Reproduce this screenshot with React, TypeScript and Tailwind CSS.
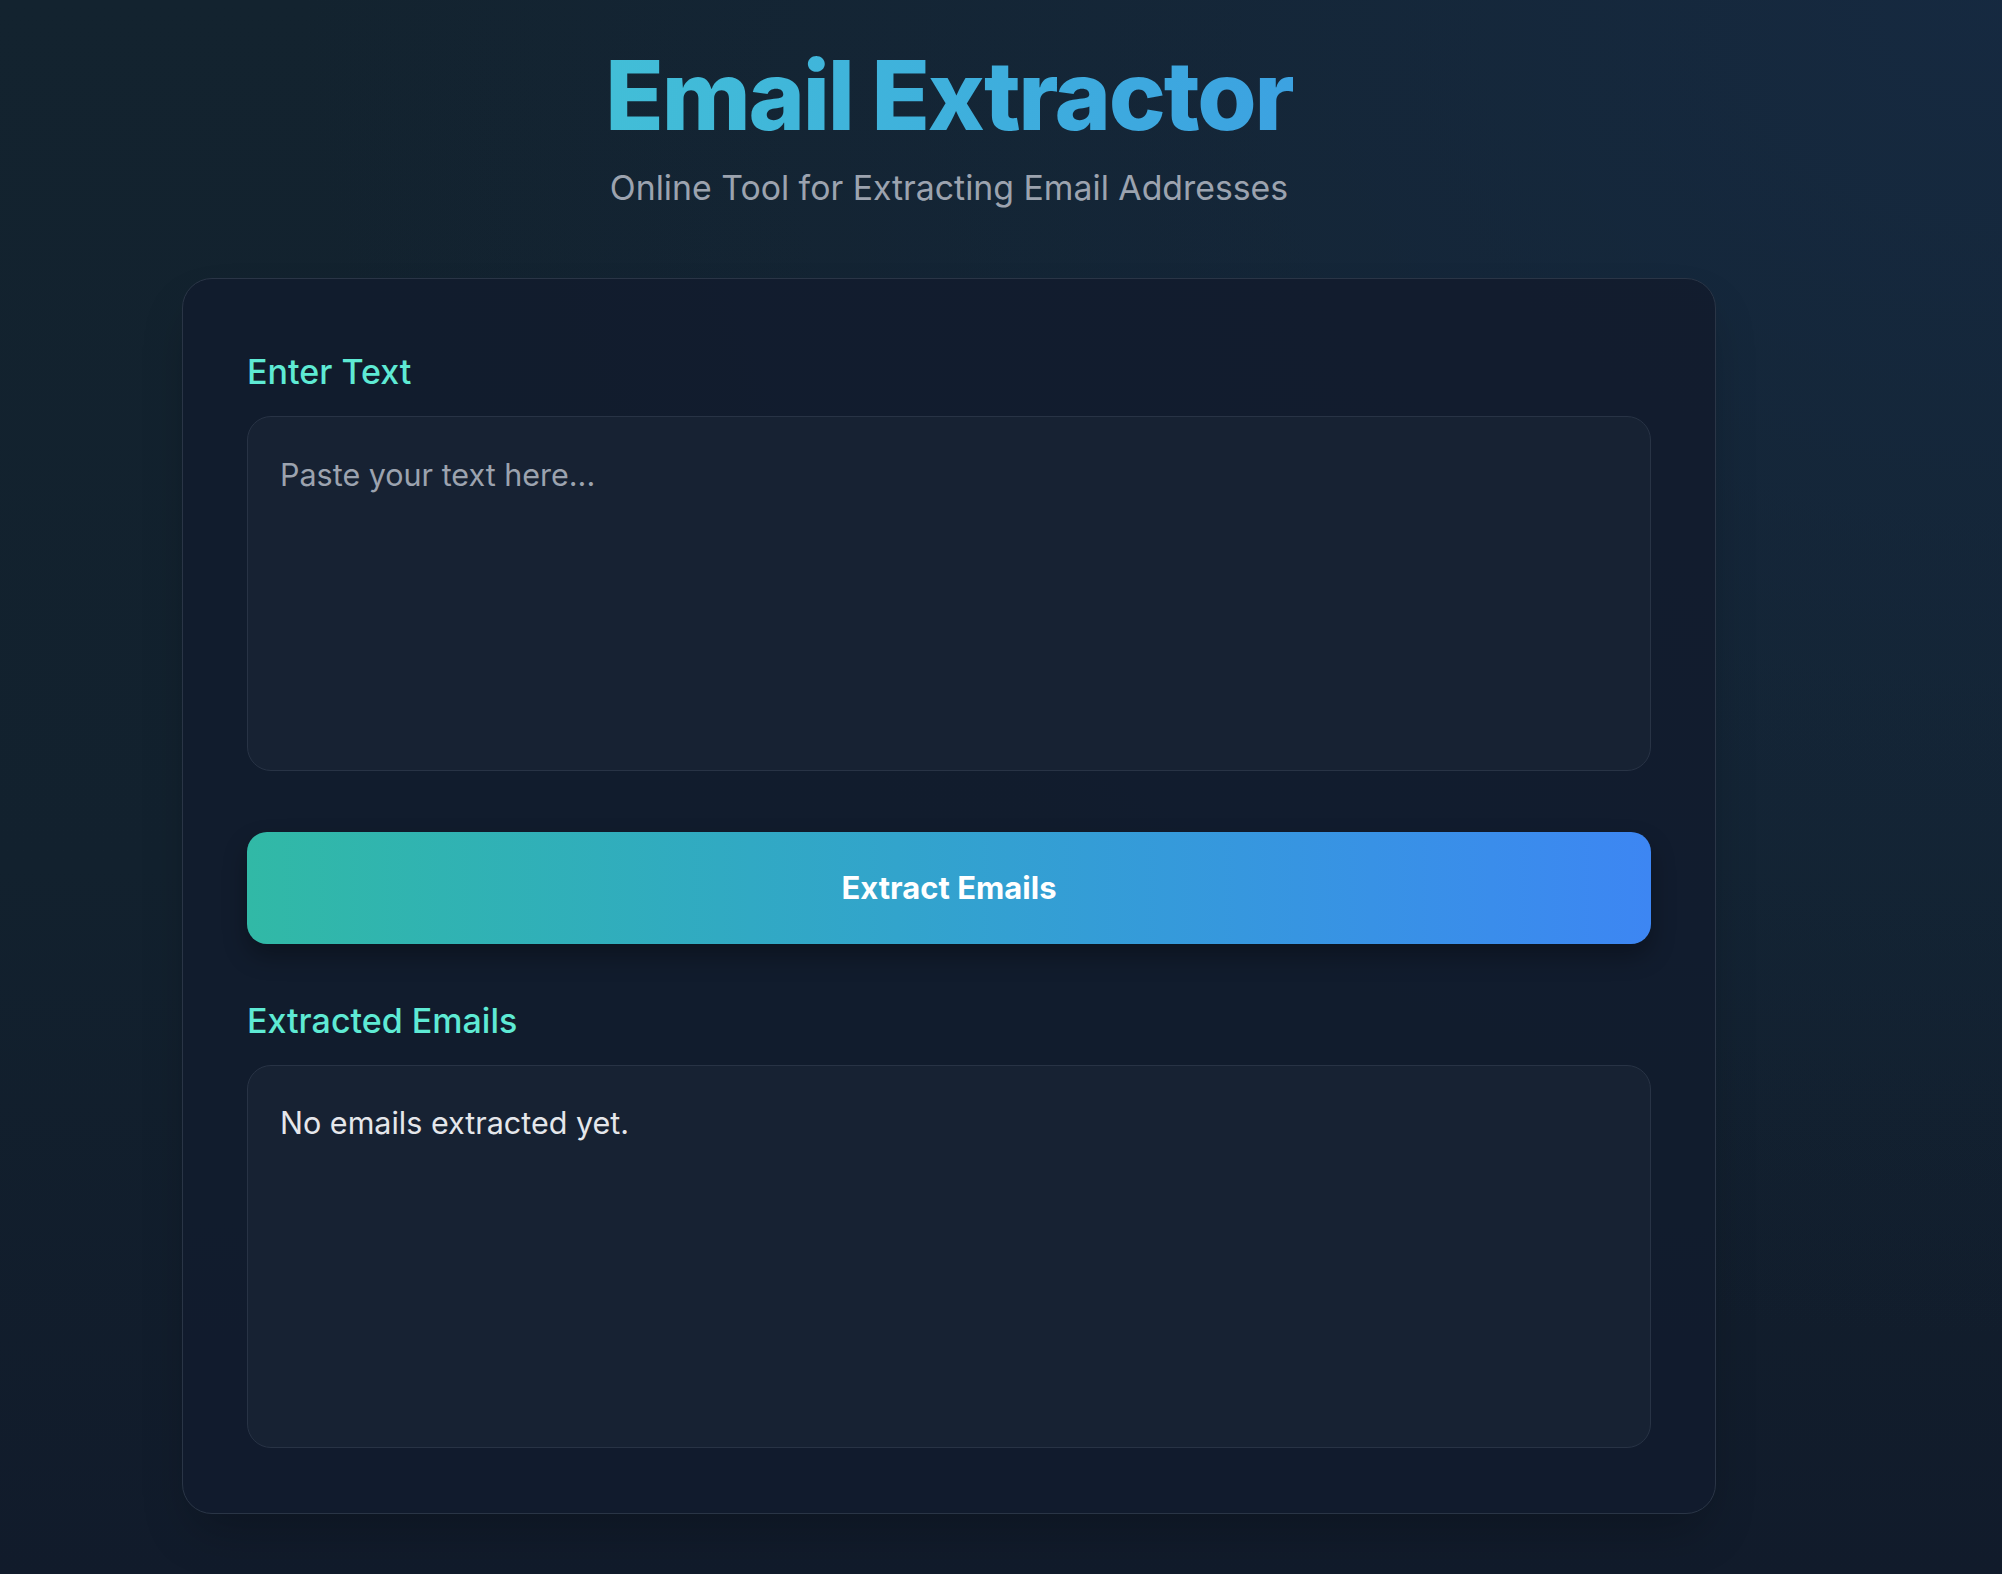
import React from "react";

export default function App() {
  return (
    <div
      className="min-h-[1574px] w-full bg-[radial-gradient(ellipse_at_100%_0%,rgba(22,42,66,0.9)_0%,rgba(22,42,66,0)_60%),linear-gradient(to_bottom,#13232f_0%,#12212e_55%,#111b2b_100%)]"
      style={{ fontFamily: "Inter, 'Noto Sans', sans-serif" }}
    >
      <div className="w-[1898px] flex flex-col items-center pt-[47px] pb-[61px]">
        <h1 className="text-[96px] leading-[96px] font-extrabold tracking-[-2.2px] bg-gradient-to-r from-[#42bed7] to-[#3ca2e1] bg-clip-text text-transparent">
          Email Extractor
        </h1>
        <p className="mt-[25px] text-[33.8px] leading-[40px] text-[#9ca3af]">
          Online Tool for Extracting Email Addresses
        </p>

        <div className="mt-[70px] w-[1534px] rounded-[30px] border border-[#2a3546] bg-[#121c2e]/90 px-16 pt-[73px] pb-[65px] shadow-2xl">
          <label className="block text-[34px] leading-[40px] font-medium text-[#5eead4] mb-[24px]">
            Enter Text
          </label>
          <textarea
            placeholder="Paste your text here..."
            className="block w-full h-[355px] resize-none rounded-[24px] border border-[#283345] bg-[#172233] p-8 text-[30.5px] leading-[52px] text-[#e5e7eb] placeholder:text-[#9ca3af] outline-none"
          />

          <button className="mt-[61px] w-full h-[112px] rounded-[20px] bg-gradient-to-r from-[#31b9a6] to-[#3d86f3] text-white text-[31px] font-bold shadow-[0_12px_24px_rgba(0,0,0,0.3)]">
            Extract Emails
          </button>

          <label className="block mt-[57px] text-[34px] leading-[40px] font-medium text-[#5eead4] mb-[24px]">
            Extracted Emails
          </label>
          <div className="h-[383px] w-full rounded-[24px] border border-[#283345] bg-[#172233] px-8 pt-[31px] pb-8 text-[30.5px] leading-[52px] text-[#e5e7eb]">
            No emails extracted yet.
          </div>
        </div>
      </div>
    </div>
  );
}
